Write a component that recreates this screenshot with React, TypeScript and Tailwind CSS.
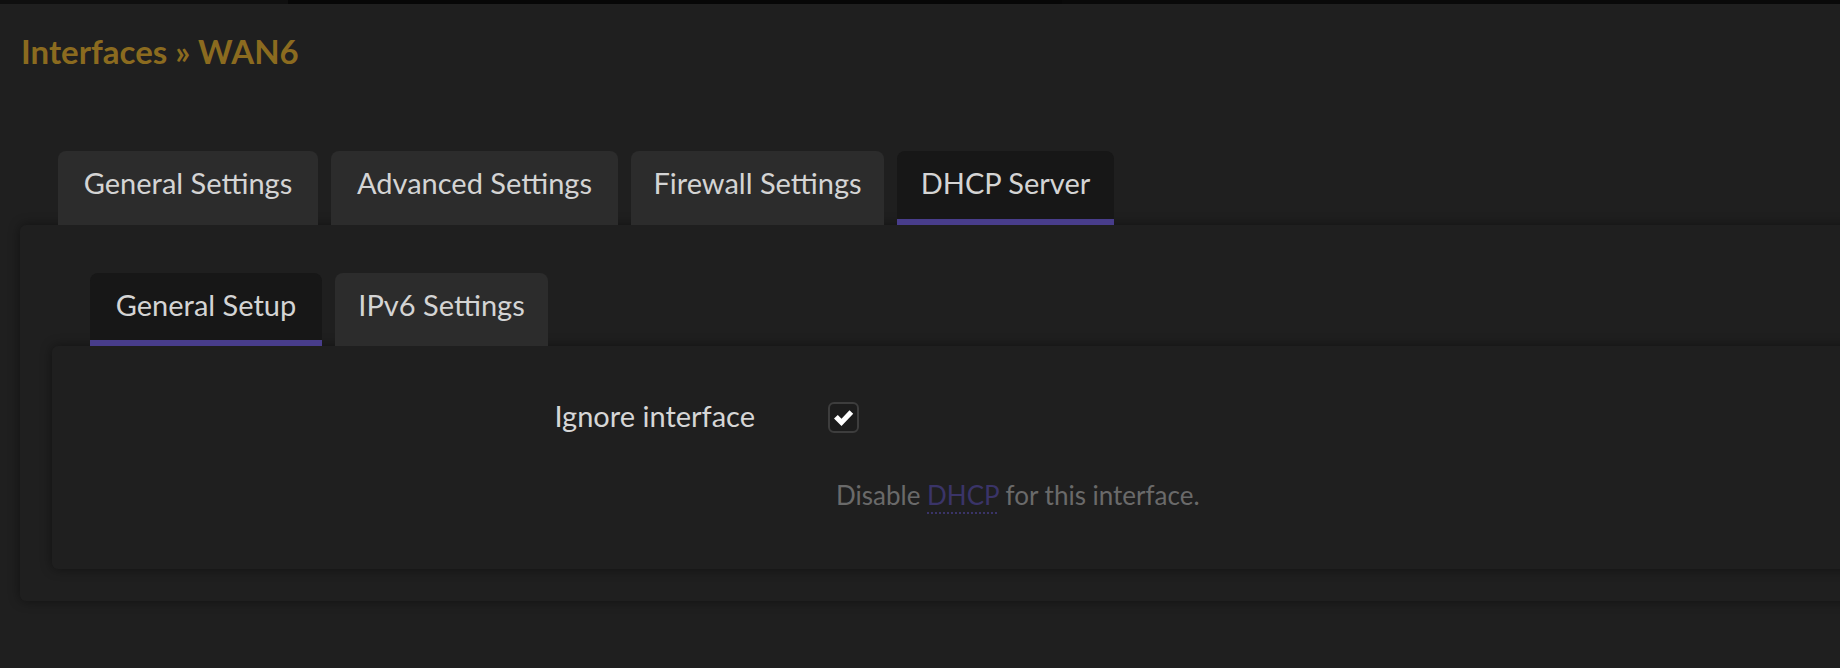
import React from "react";

const font = { fontFamily: "Lato, 'Open Sans', sans-serif" };

function Tab({ label, width, active }: { label: string; width: string; active?: boolean }) {
  return (
    <div
      className={`${width} h-[74px] shrink-0 rounded-t-[8px] pt-[14px] text-center text-[29px] leading-[35px] text-[#d4d4d4] relative z-10 ${
        active ? "bg-[#171717] border-b-[6px] border-[#483d8b]" : "bg-[#2c2c2c]"
      }`}
    >
      {label}
    </div>
  );
}

function SubTab({ label, width, active }: { label: string; width: string; active?: boolean }) {
  return (
    <div
      className={`${width} h-[73px] shrink-0 rounded-t-[8px] pt-[14px] text-center text-[29px] leading-[35px] text-[#d4d4d4] relative z-10 ${
        active ? "bg-[#171717] border-b-[6px] border-[#483d8b]" : "bg-[#2c2c2c]"
      }`}
    >
      {label}
    </div>
  );
}

export default function App() {
  return (
    <div className="w-[1840px] h-[668px] bg-[#1f1f1f] overflow-hidden" style={font}>
      <div className="h-[4px] flex">
        <div className="w-[288px] bg-[#0f0f0f]" />
        <div className="w-[774px] bg-[#070707]" />
        <div className="flex-1 bg-[#090909]" />
      </div>

      <div className="mt-[27px] pl-[21px] h-[40px] text-[33px] leading-[40px] font-bold text-[#8b6b1f]">
        Interfaces » WAN6
      </div>

      <div className="mt-[80px] ml-[58px] flex gap-[13px]">
        <Tab label="General Settings" width="w-[260px]" />
        <Tab label="Advanced Settings" width="w-[287px]" />
        <Tab label="Firewall Settings" width="w-[253px]" />
        <Tab label="DHCP Server" width="w-[217px]" active />
      </div>

      <div className="ml-[20px] mr-[-40px] rounded-[6px] bg-[#1f1f1f] shadow-[0_0_12px_rgba(0,0,0,0.45)] pt-[48px] pl-[32px] pb-[32px]">
        <div className="ml-[38px] flex gap-[13px]">
          <SubTab label="General Setup" width="w-[232px]" active />
          <SubTab label="IPv6 Settings" width="w-[213px]" />
        </div>

        <div className="h-[223px] rounded-[6px] bg-[#1f1f1f] shadow-[0_0_12px_rgba(0,0,0,0.45)] pt-[56px]">
          <div className="flex items-start">
            <div className="w-[703px] shrink-0 text-right text-[29px] leading-[31px] -mt-[2px] text-[#d6d6d6]">
              Ignore interface
            </div>
            <div className="ml-[73px] w-[31px] h-[31px] rounded-[6px] border-2 border-[#3d3d3d] bg-[#1c1c1c] flex items-center justify-center">
              <svg width="27" height="27" viewBox="0 0 27 27">
                <path d="M4 14.5 L7.8 11 L11.5 14.7 L19.5 6.3 L23.2 9.8 L11.5 21.9 Z" fill="#ffffff" />
              </svg>
            </div>
          </div>
          <div className="mt-[46px] ml-[784px] text-[26px] leading-[32px] text-[#6a6a6a] whitespace-nowrap">
            Disable{" "}
            <span className="text-[#3a3468] underline decoration-dotted decoration-2 decoration-[#3a3468] underline-offset-[7px]">
              DHCP
            </span>{" "}
            for this interface.
          </div>
        </div>
      </div>
    </div>
  );
}
